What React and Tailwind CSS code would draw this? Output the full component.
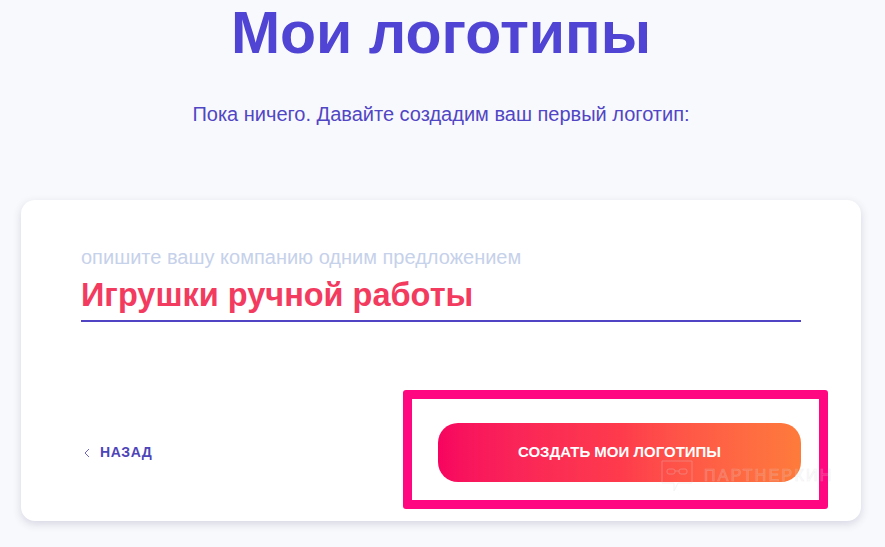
import React, { useState } from "react";

const Watermark = () => (
  <div className="absolute left-[639px] top-[259px] flex items-start gap-[10px] pointer-events-none opacity-30">
    <svg width="34" height="34" viewBox="0 0 34 34" fill="none" stroke="#d9d9de" strokeWidth="1">
      <path d="M2 2 H32 V24 H18 L14 32 V24 H2 Z" />
      <rect x="7" y="10" width="8" height="5" rx="2" />
      <rect x="19" y="10" width="8" height="5" rx="2" />
      <path d="M15 12 H19" />
    </svg>
    <span
      className="mt-[5px] text-[16px] tracking-[0.14em] text-white/30 [-webkit-text-stroke:0.7px_#d6d6dc]"
      style={{ fontFamily: '"Liberation Sans", Arial, sans-serif' }}
    >
      ПАРТНЕРКИН
    </span>
  </div>
);

const App = () => {
  const [name, setName] = useState("Игрушки ручной работы");

  return (
    <div
      className="min-h-[547px] bg-[#f8f9fc] overflow-hidden"
      style={{ fontFamily: '"Liberation Sans", Arial, sans-serif' }}
    >
      <div className="w-[840px] ml-[21px]">
        <h1 className="pt-[5px] text-center text-[59px] leading-[56px] font-bold text-[#4f44d3]">
          Мои логотипы
        </h1>
        <p className="mt-[41px] text-center text-[20px] leading-[24px] text-[#5146c4]">
          Пока ничего. Давайте создадим ваш первый логотип:
        </p>

        <div className="relative mt-[74px] h-[321px] bg-white rounded-[14px] shadow-[0_3px_8px_rgba(60,60,110,0.18)] px-[60px] pt-[45px]">
          <label className="block text-[20px] leading-[24px] text-[#c6d1ea]">
            опишите вашу компанию одним предложением
          </label>
          <input
            value={name}
            onChange={(e) => setName(e.target.value)}
            className="mt-[8px] block w-full bg-transparent outline-none border-b-2 border-[#5144c4] pb-[7px] text-[32.5px] leading-[36px] font-bold text-[#f23b5f]"
            style={{ fontFamily: '"Liberation Sans", Arial, sans-serif' }}
          />

          <div className="mt-[101px] flex items-center justify-between">
            <button className="flex items-center gap-[10px] pl-[3px] text-[#4d45b8]">
              <svg width="6" height="10" viewBox="0 0 6 10" fill="none" stroke="#6b64c4" strokeWidth="1">
                <path d="M5 1 L1 5 L5 9" />
              </svg>
              <span className="text-[14px] font-bold tracking-[0.04em]">НАЗАД</span>
            </button>

            <button className="w-[363px] h-[59px] rounded-[20px] bg-gradient-to-r from-[#f7035f] via-[#fe3a4c] to-[#fe7b3b] text-white text-[15px] font-bold">
              СОЗДАТЬ МОИ ЛОГОТИПЫ
            </button>
          </div>

          <div className="absolute left-[382px] top-[190px] w-[425px] h-[119px] border-[9px] border-[#ff0780] rounded-[3px] pointer-events-none" />
          <Watermark />
        </div>
      </div>
    </div>
  );
};

export default App;
